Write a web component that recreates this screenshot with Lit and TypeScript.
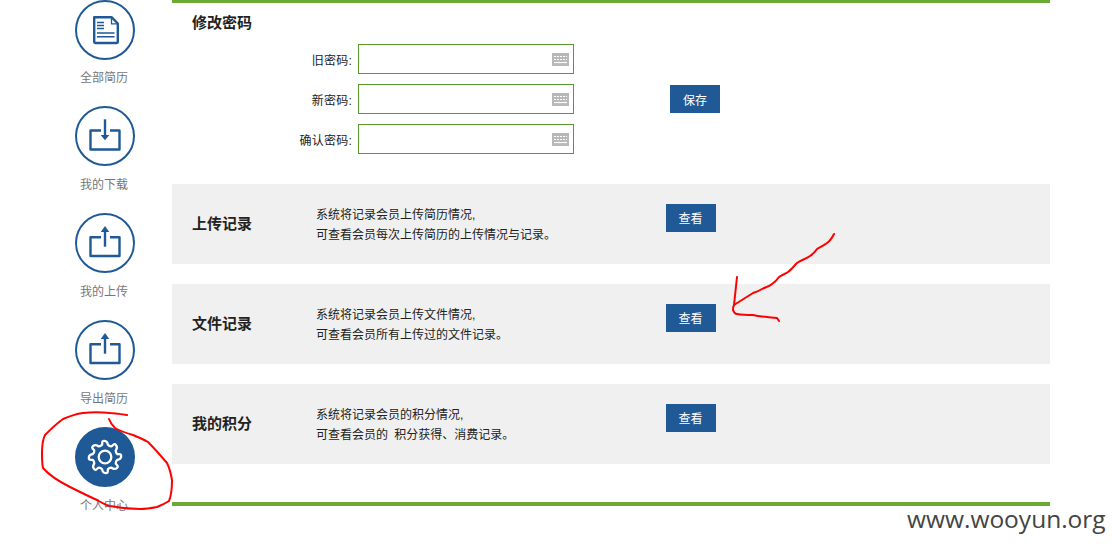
import { LitElement, html, css, svg } from "lit";
import { customElement } from "lit/decorators.js";

function gearPath(cx: number, cy: number, outer: number, inner: number, teeth: number): string {
  const pt = (r: number, a: number) => `${(cx + r * Math.sin(a)).toFixed(2)} ${(cy - r * Math.cos(a)).toFixed(2)}`;
  const step = (Math.PI * 2) / teeth;
  let d = "";
  for (let i = 0; i < teeth; i++) {
    const a = i * step;
    const w = step * 0.2;
    d += `${i === 0 ? "M" : "L"}${pt(inner, a - step * 0.3)} `;
    d += `C${pt(inner + 2, a - w * 1.1)} ${pt(outer + 0.6, a - w * 1.3)} ${pt(outer, a - w * 0.2)} `;
    d += `S${pt(inner + 2, a + w * 1.1)} ${pt(inner, a + step * 0.3)} `;
    d += `Q${pt(inner - 1.2, a + step * 0.5)} `;
    const n = a + step;
    d += `${pt(inner, n - step * 0.3)} `;
  }
  return d + "Z";
}

const docIcon = svg`
  <path class="s" d="M19.2 17.2H36.5L42.8 23.5V41.5Q42.8 43 41.3 43H20.7Q19.2 43 19.2 41.5Z" />
  <path class="s thin" d="M36.5 17.5V23.8H42.5" />
  <path class="s line" d="M22 22.5H29M22 25.5H29M22 28.5H29" />
  <path class="s line" d="M22 33H39.5M22 36.8H39.5" />`;

const downIcon = svg`
  <path class="s" d="M26 24.5H15.5V43.5H44.5V24.5H35" />
  <path class="s" d="M30 13.3V31" />
  <path class="f" d="M25.7 29H34.3L30 34.2Z" />`;

const upIcon = svg`
  <path class="s" d="M26 24.3H15.5V43H44.5V24.3H35" />
  <path class="s" d="M30 16V33.7" />
  <path class="f" d="M25.7 19L30 13L34.3 19Z" />`;

const gearIcon = svg`
  <path class="w" d="${gearPath(30, 30, 16.2, 12.6, 8)}" />
  <circle class="w" cx="30" cy="30" r="6.3" />`;

const NAV = [
  { label: "全部简历", icon: docIcon, on: false },
  { label: "我的下载", icon: downIcon, on: false },
  { label: "我的上传", icon: upIcon, on: false },
  { label: "导出简历", icon: upIcon, on: false },
  { label: "个人中心", icon: gearIcon, on: true },
];

const FIELDS = ["旧密码:", "新密码:", "确认密码:"];

const ROWS = [
  { title: "上传记录", l1: "系统将记录会员上传简历情况,", l2: "可查看会员每次上传简历的上传情况与记录。" },
  { title: "文件记录", l1: "系统将记录会员上传文件情况,", l2: "可查看会员所有上传过的文件记录。" },
  { title: "我的积分", l1: "系统将记录会员的积分情况,", l2: "可查看会员的 积分获得、消费记录。" },
];

@customElement("app-root")
export class AppRoot extends LitElement {
  static styles = css`
    :host {
      display: block;
      position: relative;
      width: 1113px;
      height: 548px;
      overflow: hidden;
      background: #fff;
      font-family: "Liberation Sans", "Noto Sans CJK SC", sans-serif;
      font-size: 12px;
      color: #222;
    }
    .page { display: flex; align-items: flex-start; }
    .side { width: 172px; flex: none; display: flex; flex-direction: column; }
    .nav { height: 107px; display: flex; flex-direction: column; align-items: center; padding-left: 38px; box-sizing: border-box; width: 172px; }
    .nav:first-child { height: 106px; }
    .circle { width: 60px; height: 60px; display: block; flex: none; }
    .ring { fill: #fff; stroke: #1f5a96; stroke-width: 2; }
    .on .ring { fill: #1f5a96; stroke: #1f5a96; }
    .s { fill: none; stroke: #1f5a96; stroke-width: 2.4; stroke-linejoin: round; }
    .thin { stroke-width: 1.3; }
    .line { stroke-width: 1.6; }
    .f { fill: #1f5a96; }
    .w { fill: none; stroke: #fff; stroke-width: 2.3; stroke-linejoin: round; }
    .nav-label { margin: 10px 2px 0 0; line-height: 18px; color: #777; white-space: nowrap; }
    .nav:first-child .nav-label { margin-top: 9px; }

    .main {
      width: 878px; flex: none; box-sizing: border-box; height: 506px;
      border-top: 3px solid #6aaa35; border-bottom: 4px solid #6aaa35;
    }
    .pw { height: 181px; box-sizing: border-box; padding-top: 10px; }
    .pw-title { font-size: 15px; font-weight: bold; line-height: 20px; padding-left: 20px; }
    .pw-body { display: flex; margin-top: 11px; }
    .fields { display: flex; flex-direction: column; gap: 10px; }
    .field { display: flex; align-items: center; height: 30px; }
    .field-label { width: 180px; text-align: right; letter-spacing: 0.25px; }
    .box {
      margin-left: 6px; width: 216px; height: 30px; box-sizing: border-box;
      border: 1px solid #5b9a2c; display: flex; align-items: center; justify-content: flex-end; padding-right: 4px;
    }
    .box input { flex: 1; min-width: 0; border: none; outline: none; background: none; height: 100%; padding: 0; }
    .kbd { width: 17px; height: 13px; display: block; flex: none; }
    .btn {
      width: 50px; height: 28px; background: #1f5a96; color: #fff; border: none; padding: 0 1px 1px 0;
      font: inherit; font-size: 12px; display: block; flex: none;
    }
    .save { margin-left: 96px; align-self: center; padding: 0; }

    .row {
      height: 80px; box-sizing: border-box; background: #f0f0f0; margin-bottom: 20px;
      display: flex; align-items: flex-start; padding: 20px 0 0 20px;
    }
    .row-title { width: 124px; flex: none; font-size: 15px; font-weight: bold; line-height: 40px; }
    .row-text { width: 350px; flex: none; line-height: 20px; padding-top: 1px; box-sizing: border-box; word-spacing: 3px; }

    .marks { position: absolute; left: 0; top: 0; width: 1113px; height: 548px; pointer-events: none; }
    .marks path { fill: none; stroke: #f00; stroke-width: 2; stroke-linecap: round; stroke-linejoin: round; }
    .wm {
      position: absolute; left: 907px; top: 503px; font-family: "Open Sans", sans-serif;
      font-size: 24.5px; line-height: 32px; color: #444; white-space: nowrap;
    }
  `;

  private kbd() {
    return html`<svg class="kbd" viewBox="0 0 17 13">
      <rect width="17" height="13" fill="#b8b8b8" />
      <path d="M2 3.5H15M2 6.5H15" stroke="#fff" stroke-width="1.2" stroke-dasharray="2 1" fill="none" />
      <path d="M2 9.5H15" stroke="#fff" stroke-width="1.2" fill="none" />
    </svg>`;
  }

  render() {
    return html`
      <div class="page">
        <div class="side">
          ${NAV.map(
            (n) => html`<div class="nav ${n.on ? "on" : ""}">
              <svg class="circle" viewBox="0 0 60 60">
                <circle class="ring" cx="30" cy="30" r="29" />
                ${n.icon}
              </svg>
              <div class="nav-label">${n.label}</div>
            </div>`
          )}
        </div>
        <div class="main">
          <section class="pw">
            <div class="pw-title">修改密码</div>
            <div class="pw-body">
              <div class="fields">
                ${FIELDS.map(
                  (f) => html`<div class="field">
                    <div class="field-label">${f}</div>
                    <div class="box"><input type="password" />${this.kbd()}</div>
                  </div>`
                )}
              </div>
              <button class="btn save">保存</button>
            </div>
          </section>
          ${ROWS.map(
            (r) => html`<div class="row">
              <div class="row-title">${r.title}</div>
              <div class="row-text">${r.l1}<br />${r.l2}</div>
              <button class="btn">查看</button>
            </div>`
          )}
        </div>
      </div>
      <svg class="marks" viewBox="0 0 1113 548">
        <path d="M127 415C120 414 112 413 110 413C100 412 92 412 83 413C76 414 70 416 63 419C56 424 50 430 45 435C42 441 42 447 42 453C42 459 42 464 43 468C50 476 60 482 70 487C80 492 88 496 97 500C102 503 106 505 110 506C120 508 130 509 140 509C147 509 152 508 157 507C162 505 166 503 169 501C172 494 172 487 172 480C171 474 170 469 167 463C161 456 155 449 148 442C143 439 138 437 133 435C126 433 120 431 115 428C112 425 110 422 109 419" />
        <path d="M834 234C832 238 830 241 827 243C823 246 820 247 817 249C815 252 813 254 810 256C806 259 801 260 797 263C794 266 791 270 788 272C785 274 782 275 779 277C777 280 775 282 772 284C769 287 765 287 762 289C759 291 756 292 753 293L734 305" />
        <path d="M737 277C736 286 735 296 734 305C733 307 733 309 733 310C734 313 735 314 737 314C743 315 748 315 753 315C761 317 769 317 777 318L779 321" />
      </svg>
      <div class="wm">www.wooyun.org</div>
    `;
  }
}
